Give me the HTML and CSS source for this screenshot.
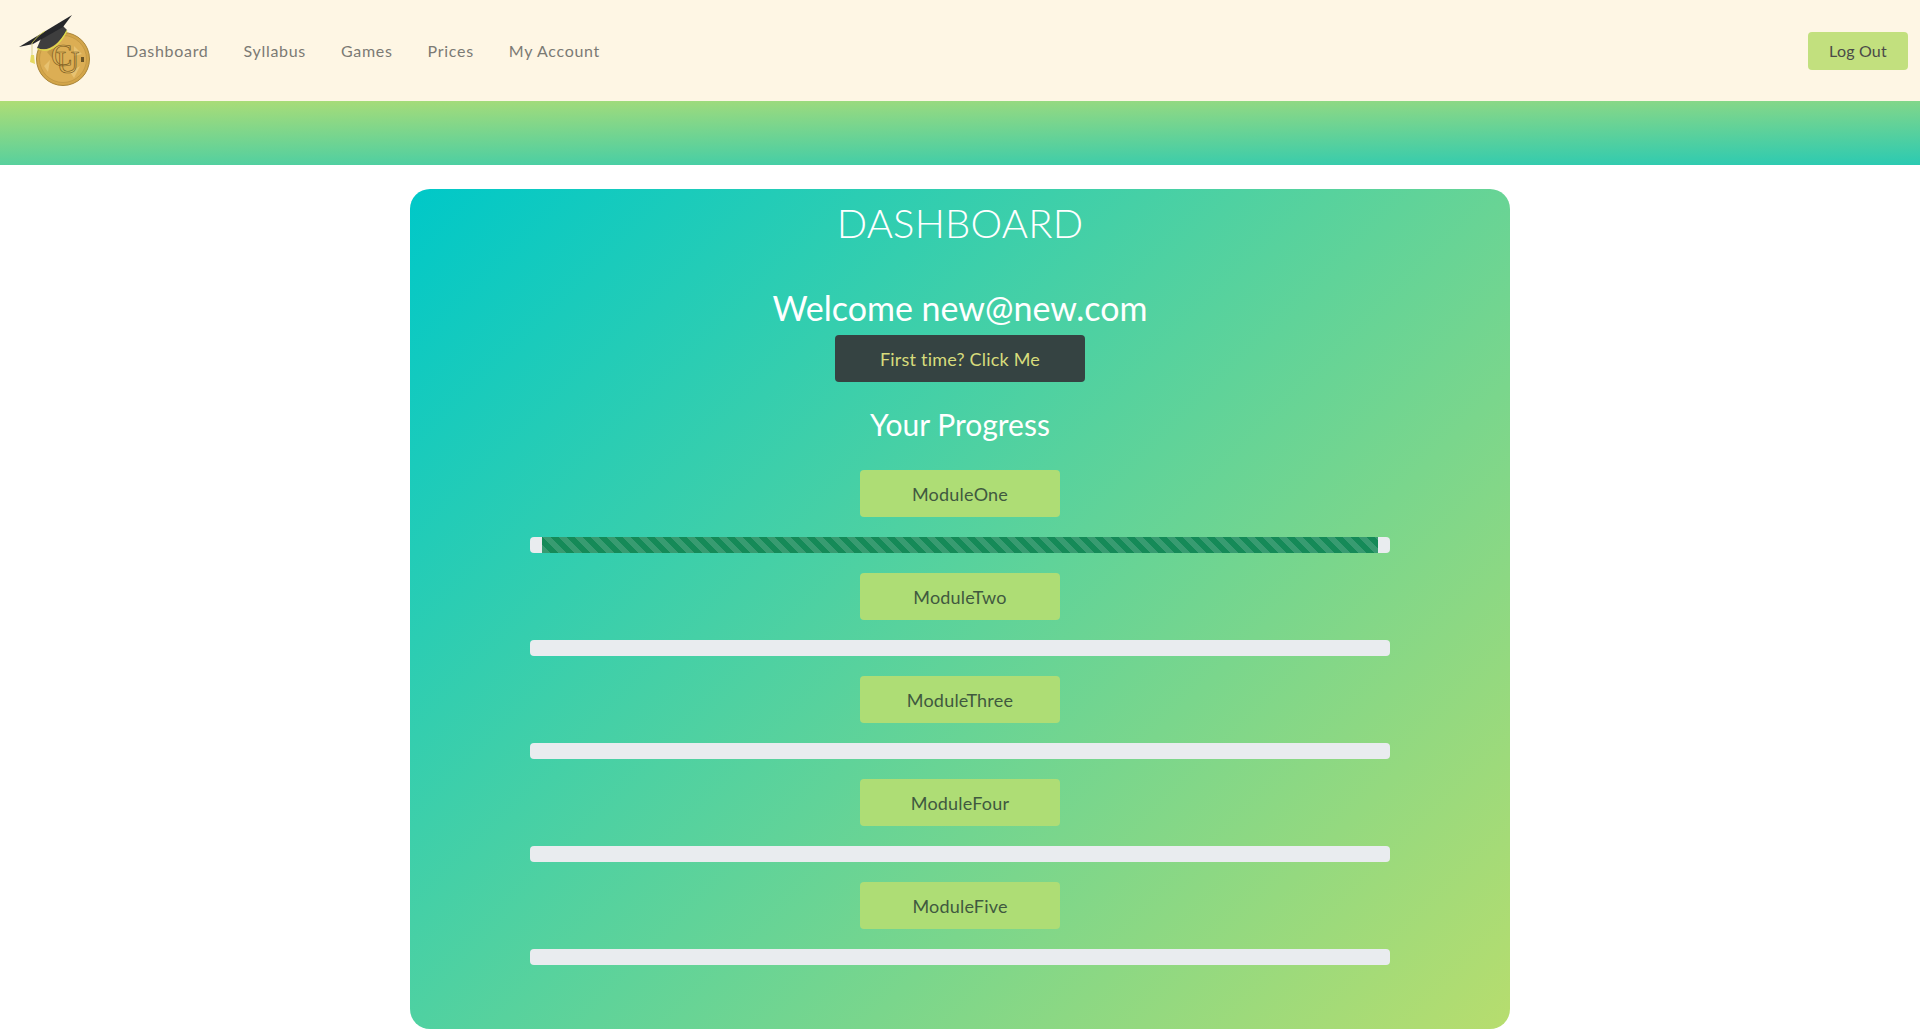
FILE: index.html
```html
<html>

<head>
    <title>Dashboard</title>
    <link rel="stylesheet" href="styles.css">
</head>

<body>
    <nav id="topmenu">
        <svg class="logo" viewBox="0 0 110 110" width="110" height="110">
            <circle cx="63" cy="59" r="26.5" fill="#d3a549" stroke="#a98538" stroke-width="1"/>
            <circle cx="63" cy="59" r="23.5" fill="#dcae54" stroke="#bd9342" stroke-width="0.7"/>
            <path d="M44 66 L50 60 L48 72 Z M70 72 L80 66 L74 78 Z M74 46 L82 54 L74 56 Z" fill="#eccb7c" opacity="0.7"/>
            <path d="M47 52 L53 48 L52 58 Z" fill="#a98538" opacity="0.5"/>
            <text class="mono" x="51" y="66" font-size="32">C<tspan dx="-16" dy="7">U</tspan></text>
            <rect x="81" y="57" width="3" height="5" fill="#6b5526"/>
            <path d="M37 48 Q53 54 67 30 L60 23 L43 34 Z" fill="#3e3e3e"/>
            <path d="M37 48.5 Q54 56 67 30.5" fill="none" stroke="#dde04c" stroke-width="1.3"/>
            <path d="M19 47 L72 15 L63 27 L33 44 Z" fill="#26272a"/>
            <path d="M32 43 Q38 35 45 31" fill="none" stroke="#d8d650" stroke-width="0.8"/>
            <path d="M32 43 L32 56" fill="none" stroke="#d6d090" stroke-width="1"/>
            <path d="M31 55 L30 62 L35 64 L34 55 Z" fill="#e6da62"/>
        </svg>
        <a href="#">Dashboard</a>
        <a href="#">Syllabus</a>
        <a href="#">Games</a>
        <a href="#">Prices</a>
        <a href="#">My Account</a>
        <button class="logout">Log Out</button>
    </nav>
    <div id="band"></div>

    <main id="card">
        <h1>DASHBOARD</h1>
        <h2>Welcome new@new.com</h2>
        <button class="firsttime">First time? Click Me</button>
        <h3>Your Progress</h3>

        <button class="module">ModuleOne</button>
        <div class="progress"><div class="progressbar"></div></div>
        <button class="module">ModuleTwo</button>
        <div class="progress"></div>
        <button class="module">ModuleThree</button>
        <div class="progress"></div>
        <button class="module">ModuleFour</button>
        <div class="progress"></div>
        <button class="module">ModuleFive</button>
        <div class="progress"></div>
    </main>
</body>

</html>
```

FILE: styles.css
```css
* {
    margin: 0;
    padding: 0;
    box-sizing: border-box;
}

body {
    background-color: white;
    font-family: 'Lato', sans-serif;
    overflow: hidden;
}

button {
    border: none;
    border-radius: 4px;
    font-family: 'Lato', sans-serif;
    font-size: 16px;
    letter-spacing: 0.2px;
}

#topmenu {
    background-color: #fef6e4;
    height: 101px;
    display: flex;
    align-items: center;
    padding-right: 12px;
}

.logo {
    flex: none;
    margin-right: 16px;
    margin-top: 9px;
}

.mono {
    font-family: 'Liberation Serif', serif;
    fill: none;
    stroke: #7a5c22;
    stroke-width: 0.7;
}

#topmenu a {
    color: #7b7a74;
    font-size: 16px;
    letter-spacing: 0.7px;
    text-decoration: none;
    margin-right: 35px;
}

.logout {
    margin-left: auto;
    width: 100px;
    height: 38px;
    background-color: #c2e07e;
    color: #4a4a48;
}

#band {
    height: 64px;
    background: linear-gradient(179deg, #aedd75, #2bcab2);
}

#card {
    width: 1100px;
    height: 840px;
    margin: 24px auto 0;
    padding: 10px 120px 0;
    border-radius: 20px;
    background: linear-gradient(135deg, #00c8c8, #b7dd6e);
    color: white;
    text-align: center;
    display: flex;
    flex-direction: column;
    align-items: center;
}

#card h1 {
    font-size: 40px;
    font-weight: 300;
    line-height: 48px;
    letter-spacing: 0.2px;
}

#card h2 {
    font-size: 34px;
    font-weight: 400;
    line-height: 38px;
    margin-top: 42px;
}

#card h3 {
    font-size: 30px;
    font-weight: 400;
    line-height: 34px;
    margin-top: 25px;
    margin-bottom: 29px;
}

.firsttime {
    flex: none;
    width: 250px;
    height: 47px;
    margin-top: 8px;
    background-color: #354342;
    color: #d7dc7c;
    font-size: 18px;
}

.module {
    flex: none;
    width: 200px;
    height: 47px;
    background-color: #aedd75;
    color: #40593f;
    font-size: 18px;
}

.progress {
    flex: none;
    width: 860px;
    height: 16px;
    margin: 20px 0;
    padding: 0 12px;
    border-radius: 4px;
    background-color: #e9ecef;
}

.progressbar {
    height: 100%;
    background-color: #158a58;
    background-image: linear-gradient(45deg, rgba(255,255,255,.15) 25%, transparent 25%, transparent 50%, rgba(255,255,255,.15) 50%, rgba(255,255,255,.15) 75%, transparent 75%, transparent);
    background-size: 16px 16px;
}
```
